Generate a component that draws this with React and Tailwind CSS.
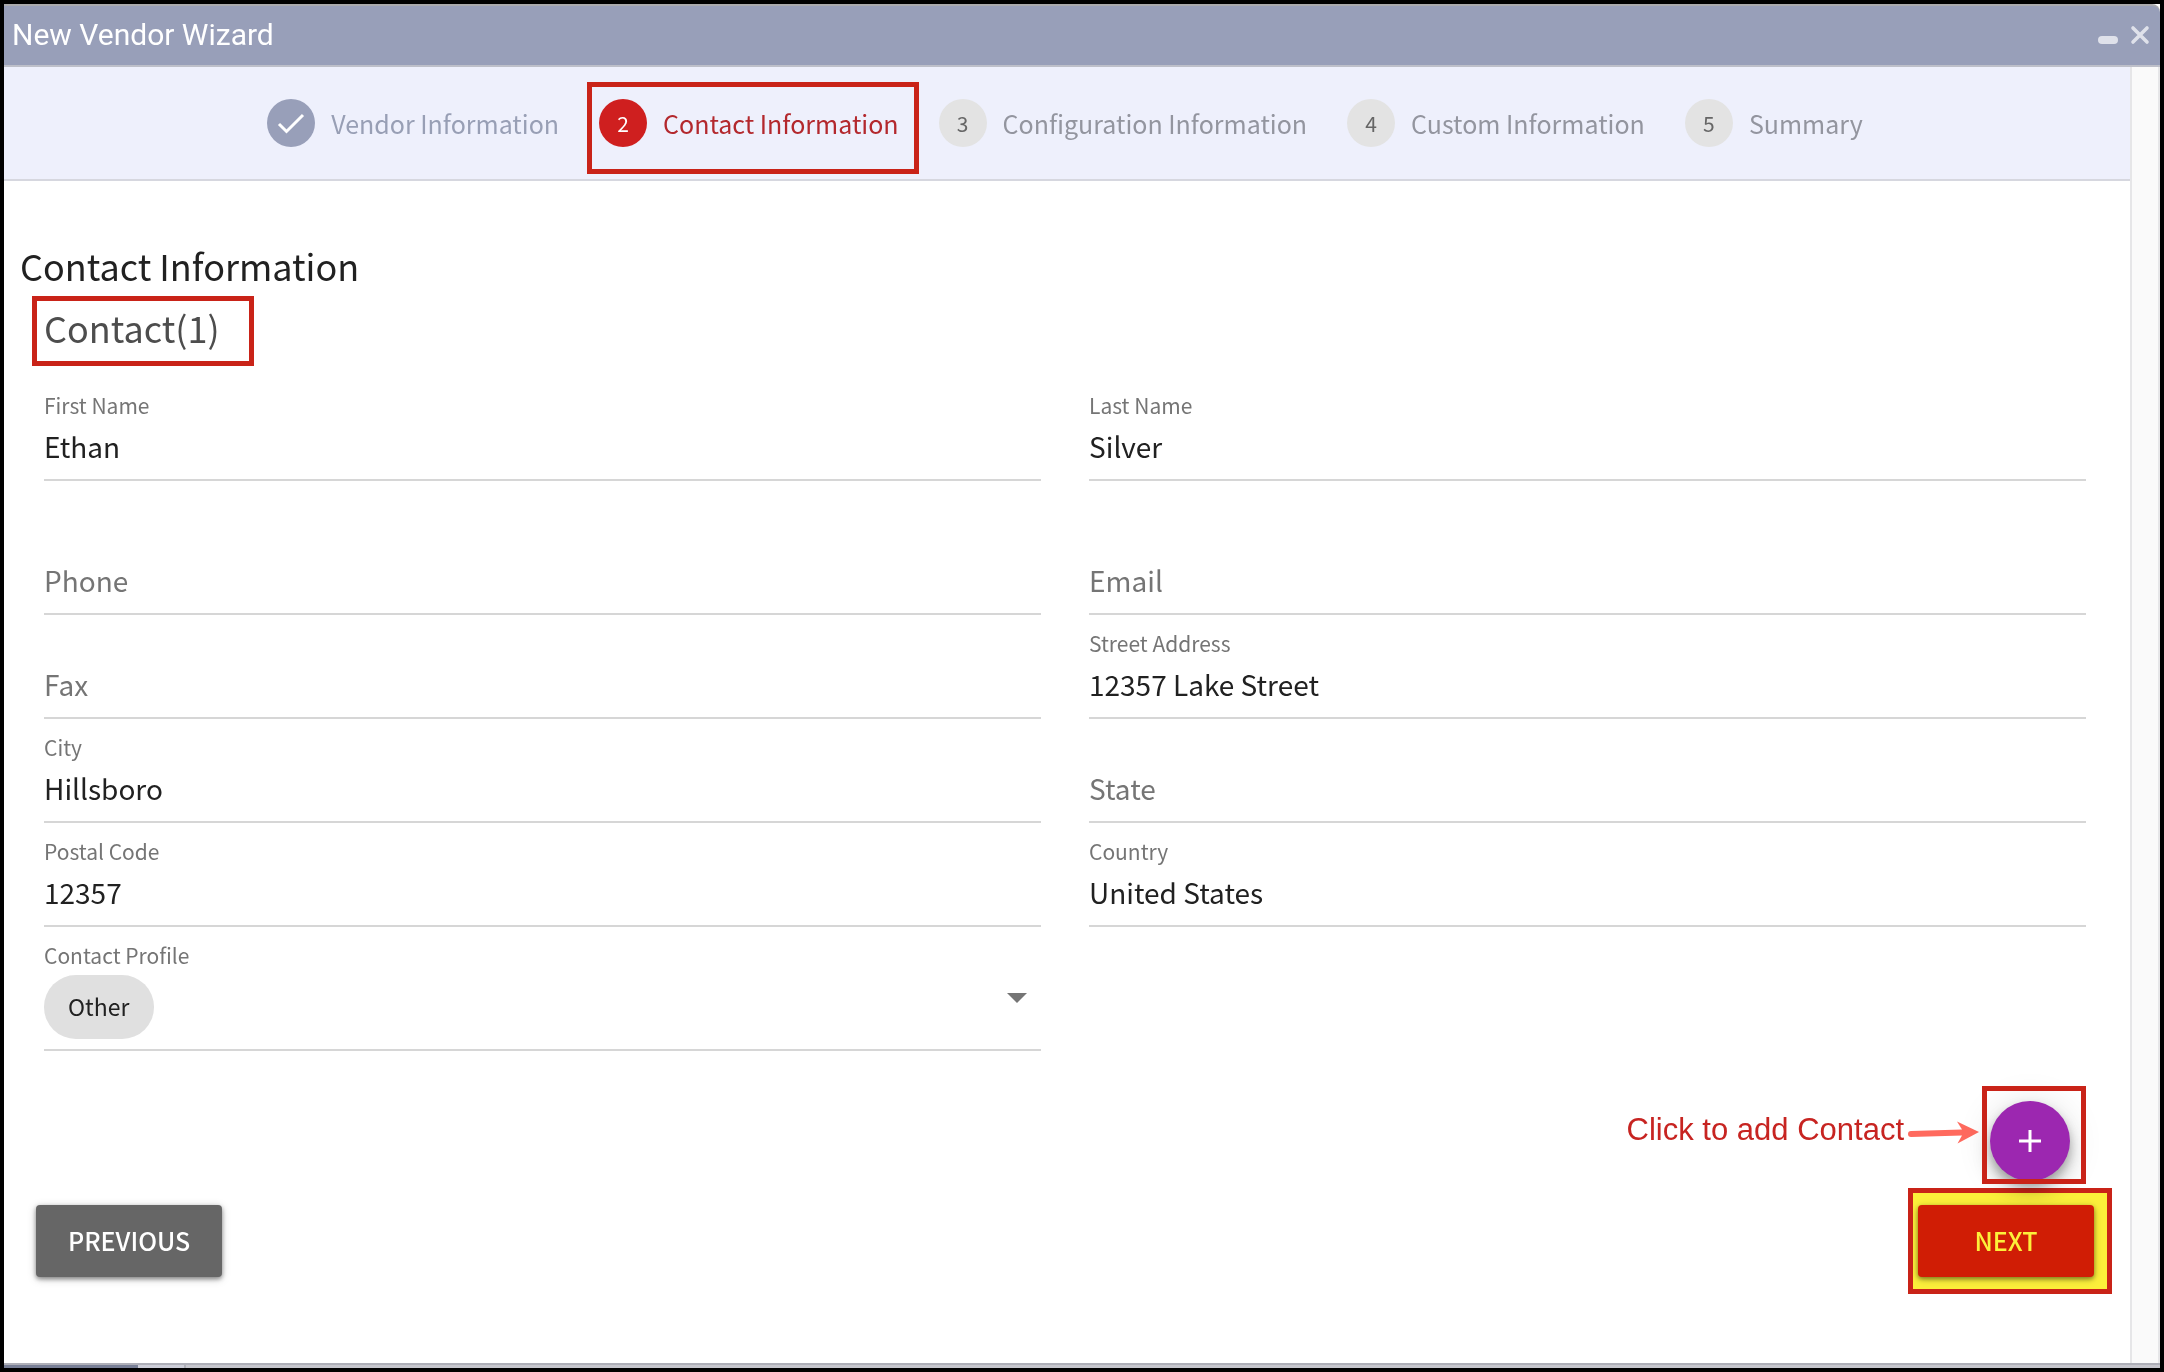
import React, { useState } from 'react';
import clsx from 'clsx';

const STEPS = [
  { id: 1, label: 'Vendor Information', status: 'done' },
  { id: 2, label: 'Contact Information', status: 'active' },
  { id: 3, label: 'Configuration Information', status: 'pending' },
  { id: 4, label: 'Custom Information', status: 'pending' },
  { id: 5, label: 'Summary', status: 'pending' },
];

const NAME_FIELDS = [
  { name: 'firstName', label: 'First Name' },
  { name: 'lastName', label: 'Last Name' },
];

const DETAIL_FIELDS = [
  { name: 'phone', label: 'Phone' },
  { name: 'email', label: 'Email' },
  { name: 'fax', label: 'Fax' },
  { name: 'street', label: 'Street Address' },
  { name: 'city', label: 'City' },
  { name: 'state', label: 'State' },
  { name: 'postalCode', label: 'Postal Code' },
  { name: 'country', label: 'Country' },
];

// Red frame drawn over the parts of the form the user should look at
const Highlight = ({ className }) => (
  <span
    aria-hidden="true"
    className={clsx('pointer-events-none absolute border-[5px] border-[#c92318]', className)}
  />
);

const TitleBar = () => (
  <header className="flex h-[63px] shrink-0 items-center justify-between rounded-tr-lg border-y-2 border-t-[#aaaaad] border-b-[#bdbfc9] bg-[#989fb9] pr-2.5 pb-0.5 pl-2">
    <h1 className="font-[Roboto,sans-serif] text-[30px] leading-9 text-white">New Vendor Wizard</h1>
    <div className="flex items-center gap-3">
      <button type="button" aria-label="Minimize">
        <svg className="h-5 w-5" viewBox="0 0 20 20">
          <rect x="0" y="11" width="20" height="8" rx="4" fill="#dfe1ea" />
        </svg>
      </button>
      <button type="button" aria-label="Close">
        <svg className="h-5 w-5" viewBox="0 0 20 20" fill="none" stroke="#dfe1ea" strokeWidth="3.6" strokeLinecap="round">
          <path d="M3 3l14 14M17 3L3 17" />
        </svg>
      </button>
    </div>
  </header>
);

const Step = ({ step }) => (
  <li className="relative flex items-center gap-4">
    <span
      className={clsx(
        'flex size-12 items-center justify-center rounded-full text-[21px] leading-8',
        step.status === 'done' && 'bg-[#989fb9] text-white',
        step.status === 'active' && 'bg-[#cf1f1f] text-white',
        step.status === 'pending' && 'bg-[#e3e3e3] text-[#666666]'
      )}
    >
      {step.status === 'done' ? (
        <svg className="size-8" viewBox="0 0 32 32" fill="none" stroke="currentColor" strokeWidth="3">
          <path d="M4 17l7.500 7.500L28 8" />
        </svg>
      ) : (
        step.id
      )}
    </span>
    <span
      className={clsx(
        'text-[25px] leading-9',
        step.status === 'done' && 'text-[#989fb5]',
        step.status === 'active' && 'text-[#b3282d]',
        step.status === 'pending' && 'text-[#93959f]'
      )}
    >
      {step.label}
    </span>
    {step.status === 'active' && <Highlight className="-top-[17px] -right-5 -bottom-[27px] -left-3" />}
  </li>
);

const TextField = ({ name, label, value, onChange }) => (
  <div className="grid grid-rows-[28px_54px] border-b-2 border-[#d6d6d6] pt-3.5 pb-1.5">
    <label
      htmlFor={name}
      className={clsx(
        'pointer-events-none col-start-1 text-[#757575]',
        value ? 'row-start-1 text-[21px] leading-7' : 'row-start-2 text-[28px] leading-[54px]'
      )}
    >
      {label}
    </label>
    <input
      id={name}
      name={name}
      type="text"
      value={value}
      onChange={onChange}
      className="col-start-1 row-start-2 w-full text-[28px] text-[#212121] outline-none"
    />
  </div>
);

const ProfileField = ({ value, onChange }) => (
  <div className="border-b-2 border-[#d6d6d6] pt-3.5 pb-2.5">
    <label htmlFor="profile" className="block text-[21px] leading-7 text-[#757575]">
      Contact Profile
    </label>
    <div className="mt-1.5 flex justify-between pr-3.5">
      <select
        id="profile"
        value={value}
        onChange={onChange}
        className="h-16 appearance-none rounded-full bg-[#e0e0e0] px-6 pb-0.5 text-[23px] text-[#212121] outline-none"
      >
        <option>Other</option>
      </select>
      <svg className="mt-[18px] h-2.5 w-5" viewBox="0 0 20 10" fill="#757575">
        <path d="M0 0h20L10 10z" />
      </svg>
    </div>
  </div>
);

const App = () => {
  const [contact, setContact] = useState({
    firstName: 'Ethan',
    lastName: 'Silver',
    phone: '',
    email: '',
    fax: '',
    street: '12357 Lake Street',
    city: 'Hillsboro',
    state: '',
    postalCode: '12357',
    country: 'United States',
    profile: 'Other',
  });

  const update = (name) => (e) => setContact({ ...contact, [name]: e.target.value });

  const renderField = (field) => (
    <TextField key={field.name} {...field} value={contact[field.name]} onChange={update(field.name)} />
  );

  return (
    <div className="flex min-h-screen flex-col border-4 border-black bg-white font-['Noto_Sans_CJK_SC',sans-serif]">
      <TitleBar />

      <div className="flex flex-1">
        <main className="flex-1">
          {/* Stepper */}
          <ol className="flex h-[114px] items-center justify-center gap-10 border-b-2 border-[#d6d7df] bg-[#eef0fc] pr-1">
            {STEPS.map((step) => (
              <Step key={step.id} step={step} />
            ))}
          </ol>

          <form className="pt-16" onSubmit={(e) => e.preventDefault()}>
            <h2 className="pl-4 text-[36px] leading-10 text-[#212121]">Contact Information</h2>

            <div className="pr-11 pl-10">
              <div className="relative mt-[18px] mb-[26px] w-fit">
                <h3 className="text-[36px] leading-[48px] text-[#4d4d4d]">Contact(1)</h3>
                <Highlight className="-top-[7px] -right-[34px] -bottom-[15px] -left-3" />
              </div>

              <div className="mb-[30px] grid grid-cols-2 gap-x-12">{NAME_FIELDS.map(renderField)}</div>
              <div className="grid grid-cols-2 gap-x-12">
                {DETAIL_FIELDS.map(renderField)}
                <ProfileField value={contact.profile} onChange={update('profile')} />
              </div>
            </div>

            {/* Add contact */}
            <div className="mt-[50px] flex items-start justify-end pr-15">
              <p className="mt-2 font-['Liberation_Sans',Arial,sans-serif] text-[31px] leading-[42px] text-[#c72421]">
                Click to add Contact
              </p>
              <svg className="mt-[19px] mr-2.5 ml-1 h-6 w-18" viewBox="0 0 72 24" fill="#ff6a5e">
                <path d="M3 11L54 9.500L49 1.500L71 12L49.500 23.500L54 15.500L3 17A3 3 0 0 1 3 11z" />
              </svg>
              <div className="relative">
                <button
                  type="button"
                  aria-label="Add contact"
                  className="flex size-20 items-center justify-center rounded-full bg-[#9c27b0] shadow-[0_6px_10px_rgba(0,0,0,0.25),0_12px_20px_rgba(0,0,0,0.14),0_2px_36px_rgba(0,0,0,0.12)]"
                >
                  <svg className="size-[22px]" viewBox="0 0 22 22" fill="none" stroke="white" strokeWidth="3">
                    <path d="M11 0v22M0 11h22" />
                  </svg>
                </button>
                <Highlight className="-top-[15px] -right-4 -bottom-[3px] -left-2" />
              </div>
            </div>

            {/* Navigation */}
            <div className="mt-6 flex justify-between px-8 pr-9">
              <button
                type="button"
                className="h-[72px] rounded-sm bg-[#666666] px-8 text-[25px] font-medium text-white shadow-[0_2px_4px_rgba(0,0,0,0.4),0_2px_10px_rgba(0,0,0,0.2)]"
              >
                PREVIOUS
              </button>
              <div className="relative">
                <button
                  type="submit"
                  className="h-[72px] w-44 rounded-sm bg-[#d31e12] text-[25px] font-medium text-white shadow-[0_2px_4px_rgba(0,0,0,0.4),0_2px_10px_rgba(0,0,0,0.2)]"
                >
                  NEXT
                </button>
                <Highlight className="-top-[17px] -right-[18px] -bottom-[17px] -left-2.5 bg-[#fcf03a] bg-clip-padding mix-blend-multiply" />
              </div>
            </div>
          </form>
        </main>

        {/* Scroll track */}
        <div className="w-[30px] border-r-2 border-l-2 border-[#e6e6e8] bg-[#fafafa]" />
      </div>

      {/* Task strip */}
      <footer className="flex h-[5px] border-t-2 border-[#aeafb8] bg-[#c6c6cd]">
        <div className="w-[134px] bg-[#787f96]" />
        <div className="w-12 border-r-2 border-[#aeafb8] bg-[#cdced8]" />
      </footer>
    </div>
  );
};

export default App;
